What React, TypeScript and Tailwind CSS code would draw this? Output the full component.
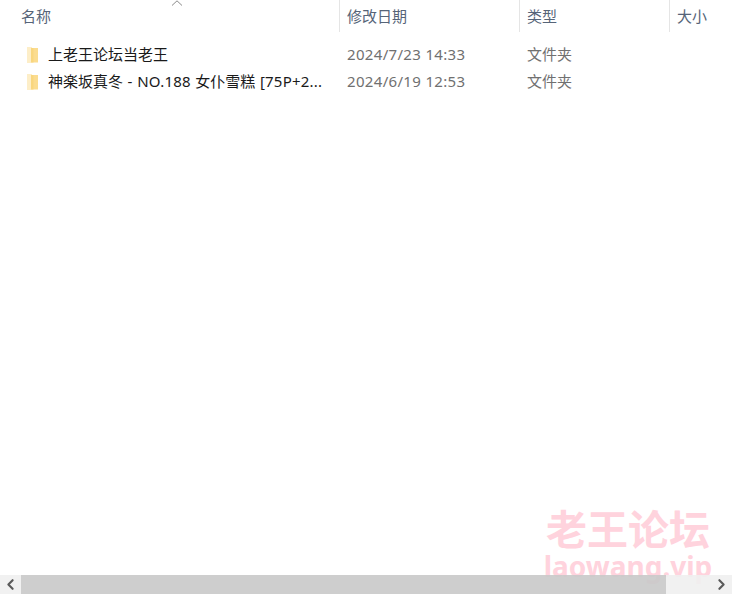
import type { ReactNode } from 'react';
import { ChevronLeft, ChevronRight } from 'lucide-react';

const font = '[font-family:"Noto_Sans","Noto_Sans_CJK_SC",sans-serif]';

function Latin({ children }: { children: ReactNode }) {
  return <span className="tracking-[0.2px] [word-spacing:0.5px]">{children}</span>;
}

const rows: { id: number; name: ReactNode; date: string; type: string }[] = [
  { id: 1, name: '上老王论坛当老王', date: '2024/7/23 14:33', type: '文件夹' },
  {
    id: 2,
    name: (
      <>
        神楽坂真冬<Latin> - NO.188 </Latin>女仆雪糕<Latin> [75P+2...</Latin>
      </>
    ),
    date: '2024/6/19 12:53',
    type: '文件夹',
  },
];

function FolderIcon() {
  return (
    <svg width="13" height="18" viewBox="0 0 13 18" className="shrink-0">
      <path d="M1 1h4l1 1h6v14.5H1z" fill="#fbdc8f" />
      <path d="M1 1h5v15.5H1z" fill="#fdeec8" />
      <path d="M5 2h2.5v14.5H5z" fill="#f9d67e" />
    </svg>
  );
}

function HeaderCell({ label, className }: { label: string; className: string }) {
  return <div className={`flex h-[32px] items-center border-r border-[#e5e5e5] text-[15px] text-[#566478] ${className}`}>{label}</div>;
}

export default function App() {
  return (
    <div className={`relative flex h-[594px] w-[732px] flex-col overflow-hidden bg-white ${font}`}>
      <div className="relative flex h-[32px] shrink-0">
        <svg width="12" height="6" viewBox="0 0 12 6" className="absolute left-[171px] top-0">
          <path d="M1 5.5 6 .8l5 4.7" fill="none" stroke="#8a8a8a" strokeWidth="1" />
        </svg>
        <HeaderCell label="名称" className="w-[340px] pl-[21px]" />
        <HeaderCell label="修改日期" className="w-[180px] pl-[7px]" />
        <HeaderCell label="类型" className="w-[150px] pl-[7px]" />
        <div className="flex h-[32px] flex-1 items-center pl-[7px] text-[15px] text-[#566478]">大小</div>
      </div>

      <div className="flex flex-1 flex-col pt-[9px]">
        {rows.map((row) => (
          <div key={row.id} className="flex h-[27px] items-center text-[15px]">
            <div className="flex w-[340px] items-center gap-[9px] pl-[26px] text-[#1a1a1a]">
              <FolderIcon />
              <span className="whitespace-nowrap">{row.name}</span>
            </div>
            <div className="w-[180px] pl-[7px] tracking-[0.33px] text-[#707070]">{row.date}</div>
            <div className="pl-[7px] text-[#707070]">{row.type}</div>
          </div>
        ))}
      </div>

      {/* watermark shows faintly through the scrollbar */}
      <div className="absolute left-[543px] top-[508px] flex w-[170px] flex-col items-center text-[#ffd3dd]">
        <div className="h-[42px] text-[41px] leading-[42px] font-bold whitespace-nowrap">老王论坛</div>
        <div className="h-[32px] text-[28px] leading-[32px] font-bold whitespace-nowrap">laowang.vip</div>
      </div>

      <div className="relative z-10 flex h-[19px] shrink-0 items-center">
        <div className="flex h-full w-[21px] items-center justify-center bg-[#f0f0f0]/90">
          <ChevronLeft size={17} strokeWidth={3} className="text-[#5a5a5a]" />
        </div>
        <div className="h-full w-[645px] bg-[#c9c9c9]/90" />
        <div className="h-full flex-1 bg-[#f0f0f0]/90" />
        <div className="flex h-full w-[21px] items-center justify-center bg-[#f0f0f0]/90">
          <ChevronRight size={17} strokeWidth={3} className="text-[#5a5a5a]" />
        </div>
      </div>
    </div>
  );
}
